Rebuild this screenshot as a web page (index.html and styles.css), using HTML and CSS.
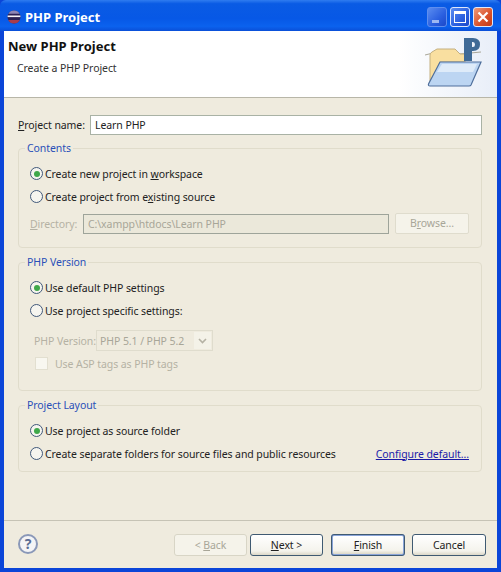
FILE: index.html
```html
<!DOCTYPE html>
<html>
<head>
  <link rel="stylesheet" href="styles.css">
</head>
<body>
  <div class="window">

    <!-- Title bar -->
    <div class="titlebar">
      <svg class="app-icon" width="14" height="14" viewBox="0 0 14 14">
        <circle cx="7" cy="7" r="6.5" fill="#2c2255"/>
        <path d="M7 .5a6.500 6.500 0 0 1 5.600 3.200H1.400A6.500 6.500 0 0 1 7 .5z" fill="#8f86b4"/>
        <path d="M1.200 10h11.600a6.500 6.500 0 0 1-11.600 0z" fill="#a83c4c"/>
        <path d="M.6 5.500h12.800v1.600H.6z" fill="#f6f2f6"/>
      </svg>
      <span class="title">PHP Project</span>
      <div class="win-btns">
        <div class="win-btn min"><span class="min-bar"></span></div>
        <div class="win-btn max"><span class="max-box"></span></div>
        <div class="win-btn close">
          <svg width="12" height="12" viewBox="0 0 12 12"><path d="M1.500 1.500l9 9M10.500 1.500l-9 9" stroke="#fff" stroke-width="2.200"/></svg>
        </div>
      </div>
    </div>

    <div class="inner">
      <!-- Header -->
      <div class="header">
        <div class="header-text">
          <h1>New PHP Project</h1>
          <p>Create a PHP Project</p>
        </div>
        <svg class="folder" width="60" height="50" viewBox="0 0 60 50">
          <path d="M0 18l12-3" stroke="#a8a698" stroke-width="1"/>
          <path d="M35 17l21-2" stroke="#a8a698" stroke-width="1"/>
          <path d="M5 47V18q0-2 2-3l5-3h18l5 5h5v8H15L5 47z" fill="#f9dfa0" stroke="#c4b080"/>
          <path d="M15 25h41L46 48q-.5 1-2 1H5q-2 0-1.500-2L15 25z" fill="#bcd5f2" stroke="#4f6f9c" stroke-width="1.200"/>
          <path d="M17 27h35l-4 8H12z" fill="#deebf9"/>
          <path d="M39 1h9q7 0 7 6.500T48 14h-1v10h-8zM47 5v5h1q2 0 2-2.500T48 5z" fill="#3f6a96" fill-rule="evenodd"/>
        </svg>
      </div>

      <div class="main">
        <div class="name-row">
          <label><u>P</u>roject name:</label>
          <div class="field">Learn PHP</div>
        </div>

        <fieldset class="group contents">
          <legend>Contents</legend>
          <div class="radio-row"><span class="radio on"></span><span>Create new project in <u>w</u>orkspace</span></div>
          <div class="radio-row"><span class="radio"></span><span>Create project from e<u>x</u>isting source</span></div>
          <div class="dir-row">
            <label><u>D</u>irectory:</label>
            <div class="field disabled">C:\xampp\htdocs\Learn PHP</div>
            <div class="browse">B<u>r</u>owse...</div>
          </div>
        </fieldset>

        <fieldset class="group version">
          <legend>PHP Version</legend>
          <div class="radio-row"><span class="radio on"></span><span>Use default PHP settings</span></div>
          <div class="radio-row"><span class="radio"></span><span>Use project specific settings:</span></div>
          <div class="version-row">
            <label>PHP Version:</label>
            <div class="select">
              <span>PHP 5.1 / PHP 5.2</span>
              <span class="arrow">
                <svg width="9" height="6" viewBox="0 0 9 6"><path d="M1 1l3.500 3.500L8 1" fill="none" stroke="#b5b2a4" stroke-width="1.600"/></svg>
              </span>
            </div>
          </div>
          <div class="check-row"><span class="check"></span>Use ASP tags as PHP tags</div>
        </fieldset>

        <fieldset class="group layout">
          <legend>Project Layout</legend>
          <div class="radio-row"><span class="radio on"></span><span>Use project as source folder</span></div>
          <div class="radio-row split">
            <div class="radio-label"><span class="radio"></span><span>Create separate folders for source files and public resources</span></div>
            <a class="link">Configure default...</a>
          </div>
        </fieldset>
      </div>

      <!-- Buttons -->
      <div class="footer">
        <div class="help">?</div>
        <div class="buttons">
          <div class="btn off">&lt; <u>B</u>ack</div>
          <div class="btn next"><u>N</u>ext &gt;</div>
          <div class="btn default"><u>F</u>inish</div>
          <div class="btn">Cancel</div>
        </div>
      </div>
    </div>
  </div>
</body>
</html>
```

FILE: styles.css
```css
* {
  box-sizing: border-box;
}

body {
  margin: 0;
  background-color: #0a3fd0;
  font-family: "Noto Sans", sans-serif;
  font-size: 10.5px;
  letter-spacing: -0.08px;
  color: #222;
}

.window {
  width: 501px;
  height: 572px;
  display: flex;
  flex-direction: column;
  padding: 0 4px 4px 4px;
  background-color: #0b45d8;
}

.titlebar {
  height: 31px;
  margin: 0 -4px;
  padding: 2px 8px 0 7px;
  display: flex;
  align-items: center;
  background: linear-gradient(to bottom, #2f7cf0 0%, #0a5be4 12%, #0758e6 60%, #0b62ee 85%, #0a4fd8 100%);
  border-radius: 6px 6px 0 0;
}

.app-icon {
  margin-right: 4px;
}

.title {
  color: white;
  font-weight: bold;
  font-size: 13px;
  letter-spacing: 0;
  flex: 1;
}

.win-btns {
  display: flex;
  gap: 3px;
}

.win-btn {
  width: 20px;
  height: 20px;
  border: 1px solid #dfe8fb;
  border-radius: 3px;
  display: flex;
  align-items: center;
  justify-content: center;
  background: linear-gradient(135deg, #5a8cf0, #2a5fe0 60%, #1c48c8);
}

.win-btn.min {
  border-color: #5f8eee;
  align-items: flex-end;
  justify-content: flex-start;
  padding: 0 0 3px 4px;
}

.min-bar {
  width: 7px;
  height: 3px;
  background-color: #9db8f2;
}

.max-box {
  width: 12px;
  height: 12px;
  border: 1px solid #fff;
  border-top-width: 3px;
}

.win-btn.close {
  background: linear-gradient(135deg, #ee9a7a, #d9502a 60%, #c23a18);
}

.inner {
  flex: 1;
  display: flex;
  flex-direction: column;
  background-color: #efebde;
}

.header {
  height: 67px;
  display: flex;
  justify-content: space-between;
  background: linear-gradient(to right, #fff 80%, #e8eef8);
  border-bottom: 1px solid #b8b6a8;
  padding: 6px 12px 0 4px;
}

.header h1 {
  margin: 0;
  font-size: 13px;
  font-weight: bold;
  letter-spacing: 0;
  line-height: 18px;
  color: #111;
}

.header p {
  margin: 5px 0 0 9px;
  line-height: 16px;
  color: #333;
}

.main {
  flex: 1;
  padding: 17px 15px 0 14px;
  border-bottom: 1px solid #c6c3b5;
}

.name-row {
  display: flex;
  align-items: center;
  height: 20px;
  margin-bottom: 6px;
}

.name-row label {
  width: 72px;
}

.field {
  flex: 1;
  height: 20px;
  padding-left: 4px;
  line-height: 18px;
  background-color: white;
  border: 1px solid #a9b2a5;
}

.group {
  margin: 0 0 7px 0;
  padding: 0 12px 0 11px;
  border: 1px solid #e0dccb;
  border-radius: 4px;
  min-width: 0;
}

.group legend {
  padding: 0 2px;
  margin-left: -5px;
  line-height: 15px;
  color: #2a50b8;
}

.contents {
  height: 107px;
}

.version {
  height: 136px;
}

.layout {
  height: 74px;
}

.radio-row {
  height: 23px;
  display: flex;
  align-items: center;
}

.contents .radio-row:first-of-type,
.version .radio-row:first-of-type,
.layout .radio-row:first-of-type {
  margin-top: 6px;
}

.radio {
  width: 13px;
  height: 13px;
  margin-right: 2px;
  flex: none;
  border: 1px solid #41597a;
  border-radius: 50%;
  background-color: #f6f5ef;
  display: inline-flex;
  align-items: center;
  justify-content: center;
}

.radio.on::after {
  content: "";
  width: 6px;
  height: 6px;
  border-radius: 50%;
  background-color: #3fa84a;
}

.radio-label {
  display: flex;
  align-items: center;
}

.split {
  justify-content: space-between;
}

.link {
  color: #1a1aa8;
  text-decoration: underline;
}

.dir-row {
  display: flex;
  align-items: center;
  height: 21px;
  margin-top: 5px;
}

.dir-row label {
  width: 53px;
  color: #b5b2a4;
}

.field.disabled {
  background-color: #ebe8da;
  color: #a8a698;
  border-color: #9ea49a;
}

.browse {
  width: 74px;
  height: 21px;
  margin-left: 6px;
  text-align: center;
  line-height: 19px;
  color: #a8a698;
  background-color: #f5f3ea;
  border: 1px solid #dfdccd;
  border-radius: 2px;
}

.version-row {
  display: flex;
  align-items: center;
  height: 21px;
  margin-top: 8px;
  padding-left: 4px;
  color: #b5b2a4;
}

.version-row label {
  width: 62px;
  white-space: nowrap;
}

.select {
  width: 117px;
  height: 21px;
  padding: 0 1px 0 3px;
  display: flex;
  align-items: center;
  justify-content: space-between;
  border: 1px solid #dfdccd;
  color: #a8a698;
}

.arrow {
  width: 17px;
  height: 17px;
  display: flex;
  align-items: center;
  justify-content: center;
  background-color: #f4f2e8;
}

.check-row {
  display: flex;
  align-items: center;
  height: 13px;
  margin-top: 6px;
  padding-left: 5px;
  color: #b5b2a4;
}

.check {
  width: 13px;
  height: 13px;
  margin-right: 7px;
  background-color: #f8f7f0;
  border: 1px solid #e2dfd0;
}

.footer {
  height: 47px;
  padding: 13px 11px 0 14px;
  display: flex;
  justify-content: space-between;
}

.help {
  width: 20px;
  height: 20px;
  border: 2px solid #8a98b8;
  border-radius: 50%;
  background-color: #f4f4f6;
  text-align: center;
  font-weight: bold;
  font-size: 14px;
  line-height: 16px;
  color: #5a6c94;
}

.buttons {
  display: flex;
  gap: 3px;
  align-items: flex-start;
}

.btn {
  width: 74px;
  height: 22px;
  text-align: center;
  line-height: 20px;
  background: linear-gradient(to bottom, #fff, #f4f3ec 80%, #dcd8c8);
  border: 1px solid #3f5a72;
  border-radius: 3px;
  color: #222;
}

.btn.off,
.btn.next {
  width: 73px;
}

.btn.off {
  color: #a8a698;
  background: #f5f3ea;
  border-color: #d8d5c6;
}

.btn.default {
  margin-left: 5px;
  margin-right: 4px;
  border: 2px solid #8aa4d8;
  outline: 1px solid #3f5a72;
  outline-offset: -1px;
  line-height: 18px;
}
```
